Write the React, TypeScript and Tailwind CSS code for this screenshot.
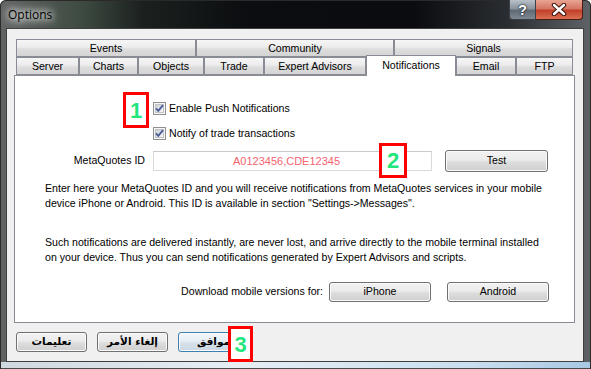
import React from "react";

const ui = "font-['Liberation_Sans',Arial,sans-serif]";

function Tab({ label, w, active }: { label: string; w: number; active?: boolean }) {
  if (active) {
    return (
      <div
        className="relative z-10 -mb-px h-[21px] shrink-0 border border-b-0 border-[#898c95] bg-white pt-[2px] text-center text-[10.6px] leading-[15px] text-black"
        style={{ width: w }}
      >
        {label}
      </div>
    );
  }
  return (
    <div
      className="h-[18px] shrink-0 border border-[#898c95] bg-[linear-gradient(180deg,#f6f6f6_0%,#ececec_45%,#dedede_55%,#d4d4d4_100%)] text-center text-[10.6px] leading-[17px] text-black"
      style={{ width: w }}
    >
      {label}
    </div>
  );
}

function Checkbox({ id }: { id: string }) {
  return (
    <svg width="13" height="13" viewBox="0 0 13 13" className="shrink-0">
      <defs>
        <linearGradient id={id} x1="0" y1="0" x2="1" y2="1">
          <stop offset="0" stopColor="#cbcfd5" />
          <stop offset="1" stopColor="#f7f7f7" />
        </linearGradient>
      </defs>
      <rect x="0.5" y="0.5" width="12" height="12" fill="#f6f6f6" stroke="#8e8f8f" />
      <rect x="2.5" y="2.5" width="8" height="8" fill={`url(#${id})`} stroke="#c0c3c8" />
      <path d="M3 6.3 L5.3 8.8 L10 3.2" stroke="#4a5f97" strokeWidth="1.9" fill="none" />
    </svg>
  );
}

function Button({
  children,
  w,
  h = 20,
  primary,
  arabic,
}: {
  children: React.ReactNode;
  w: number;
  h?: number;
  primary?: boolean;
  arabic?: boolean;
}) {
  return (
    <button
      type="button"
      dir={arabic ? "rtl" : undefined}
      style={{ width: w, height: h }}
      className={
        "shrink-0 rounded-[3px] border text-center text-black shadow-[inset_0_0_0_1px_#fbfbfb] " +
        (primary
          ? "border-[#3c7fb1] bg-[linear-gradient(180deg,#f1f6fa_0%,#e6eef5_45%,#d6e1ea_55%,#cad7e2_100%)] "
          : "border-[#707070] bg-[linear-gradient(180deg,#f2f2f2_0%,#ebebeb_45%,#dddddd_55%,#cfcfcf_100%)] ") +
        (arabic ? "font-['DejaVu_Sans',sans-serif] text-[10.5px] font-bold" : "text-[10.6px]")
      }
    >
      {children}
    </button>
  );
}

function Badge({ n, className }: { n: string; className: string }) {
  return (
    <div
      className={
        "absolute z-20 flex items-center justify-center border-[3px] border-[#ff0000] bg-white font-['Liberation_Sans',Arial,sans-serif] text-[22px] font-bold text-[#22e67c] " +
        className
      }
    >
      {n}
    </div>
  );
}

export default function App() {
  return (
    <div
      className={`${ui} relative flex h-[369px] w-[591px] flex-col overflow-hidden rounded-t-[6px] bg-[linear-gradient(90deg,#616463_0%,#3d4a41_14%,#1c211f_24%,#0b0d10_42%,#0a0c10_70%,#2a2d31_86%,#5f6266_100%)] shadow-[inset_0_0_0_1px_#2a2a2a]`}
    >
      {/* title bar */}
      <div className="relative flex h-[28px] shrink-0 items-start justify-between">
        <div className="pl-[8px] pt-[7px] font-['Open_Sans',sans-serif] text-[12px] leading-[16px] text-black [text-shadow:0_0_6px_#fff,0_0_10px_#fff,0_0_14px_#fff]">
          Options
        </div>
        <div className="mr-[8px] flex">
          <div className="flex h-[20px] w-[27px] items-center justify-center rounded-bl-[4px] border border-t-0 border-[#3a3f45] bg-[linear-gradient(180deg,#b9c1c9_0%,#8b949d_45%,#5f6a75_55%,#7d8893_100%)] font-['Liberation_Sans',sans-serif] text-[14px] font-bold leading-none text-white [text-shadow:0_0_2px_#1d2630,0_0_2px_#1d2630]">
            ?
          </div>
          <div className="flex h-[20px] w-[47px] items-center justify-center rounded-br-[4px] border border-l-0 border-t-0 border-[#4a1c14] bg-[linear-gradient(180deg,#e8a594_0%,#d67763_45%,#c2402a_55%,#d8704f_100%)]">
            <svg width="16" height="13" viewBox="0 0 16 13">
              <path d="M3 2 L13 11 M13 2 L3 11" stroke="#3b1510" strokeWidth="4.4" strokeLinecap="round" />
              <path d="M3 2 L13 11 M13 2 L3 11" stroke="#ffffff" strokeWidth="2.4" strokeLinecap="round" />
            </svg>
          </div>
        </div>
      </div>

      {/* client area */}
      <div className="ml-[6px] h-[334px] w-[578px] shrink-0 border border-[#3f3f3f] bg-[#f0f0f0]">
        <div className="ml-[7px] mt-[10px] w-[561px]">
          <div className="ml-[2px] flex h-[18px]">
            <Tab label="Events" w={180} />
            <Tab label="Community" w={198} />
            <Tab label="Signals" w={179} />
          </div>
          <div className="ml-[2px] flex h-[18px] items-end">
            <Tab label="Server" w={63} />
            <Tab label="Charts" w={59} />
            <Tab label="Objects" w={66} />
            <Tab label="Trade" w={60} />
            <Tab label="Expert Advisors" w={102} />
            <Tab label="Notifications" w={90} active />
            <Tab label="Email" w={60} />
            <Tab label="FTP" w={57} />
          </div>

          <div className="relative h-[248px] border border-[#898c95] bg-white text-[10.6px] text-black">
            <Badge n="1" className="left-[108px] top-[16px] h-[36px] w-[26px]" />
            <Badge n="2" className="left-[364px] top-[67px] h-[35px] w-[28px]" />

            <div className="ml-[138px] mt-[26px] flex h-[13px] items-center gap-[3px]">
              <Checkbox id="cb1" />
              <span className="leading-[13px]">Enable Push Notifications</span>
            </div>
            <div className="ml-[138px] mt-[12px] flex h-[13px] items-center gap-[3px]">
              <Checkbox id="cb2" />
              <span className="leading-[13px]">Notify of trade transactions</span>
            </div>

            <div className="mt-[10px] flex h-[22px] items-center">
              <div className="w-[130px] text-right">MetaQuotes ID</div>
              <div className="ml-[8px] flex h-[20px] w-[279px] items-center justify-center border border-[#d9dadf] border-t-[#c9cad0] bg-white pr-[12px] text-[11px] text-[#f4636f]">
                A0123456,CDE12345
              </div>
              <div className="ml-[13px]">
                <Button w={103} h={22}>
                  Test
                </Button>
              </div>
            </div>

            <p className="ml-[30px] mt-[9px] leading-[15px]">
              Enter here your MetaQuotes ID and you will receive notifications from MetaQuotes services in your mobile
              <br />
              device iPhone or Android. This ID is available in section "Settings-&gt;Messages".
            </p>
            <p className="ml-[30px] mt-[24px] leading-[15px]">
              Such notifications are delivered instantly, are never lost, and arrive directly to the mobile terminal installed
              <br />
              on your device. Thus you can send notifications generated by Expert Advisors and scripts.
            </p>

            <div className="mt-[17px] flex items-center justify-end pr-[25px]">
              <span>Download mobile versions for:</span>
              <div className="ml-[6px]">
                <Button w={102}>iPhone</Button>
              </div>
              <div className="ml-[16px]">
                <Button w={102}>Android</Button>
              </div>
            </div>
          </div>
        </div>

        <div className="relative ml-[9px] mt-[9px] flex gap-[10px]">
          <Button w={71} arabic>
            تعليمات
          </Button>
          <Button w={71} arabic>
            إلغاء الأمر
          </Button>
          <Button w={71} primary arabic>
            موافق
          </Button>
          <Badge n="3" className="left-[212px] top-[-6px] h-[36px] w-[25px]" />
        </div>
      </div>

      {/* bottom frame */}
      <div className="mx-[1px] flex-1 bg-[linear-gradient(90deg,#cfd8df_0%,#e7eef4_40%,#c9deef_80%,#a8c8e2_100%)] shadow-[inset_0_-1px_0_#4a4a4a]" />
    </div>
  );
}
